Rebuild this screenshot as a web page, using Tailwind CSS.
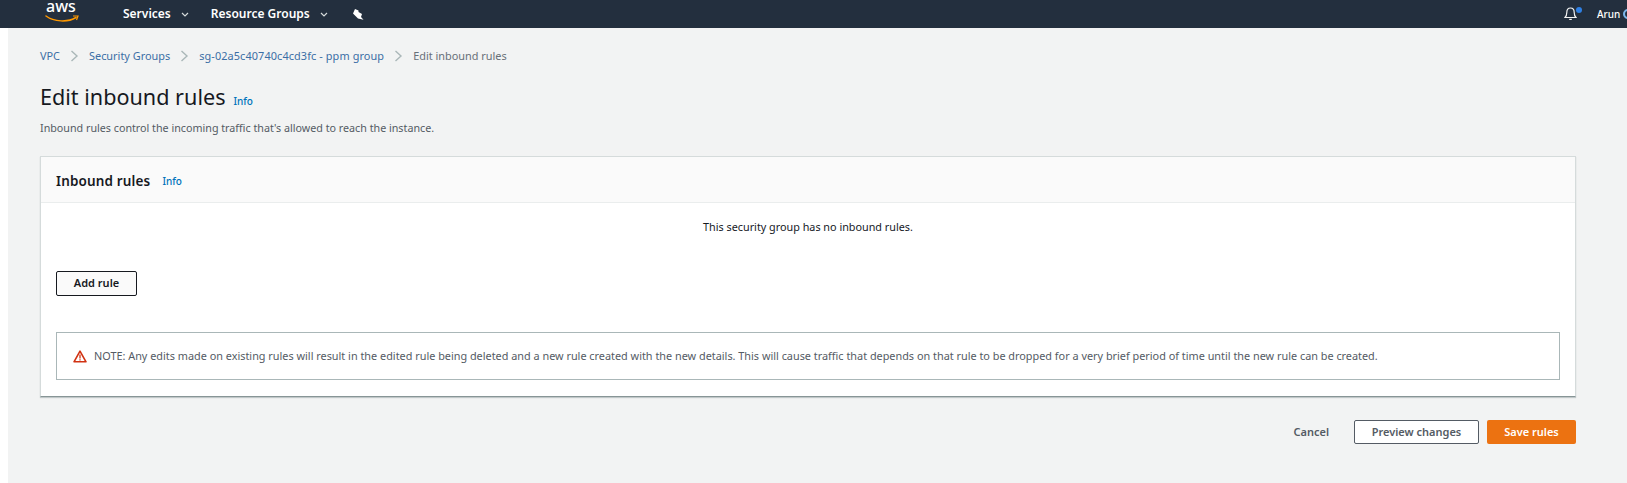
<!DOCTYPE html>
<html lang="en">
  <head>
    <meta charset="UTF-8" />
    <title>Edit inbound rules</title>
    <script src="https://cdn.jsdelivr.net/npm/@tailwindcss/browser@4"></script>
  </head>
  <body class="bg-white text-[#16191f] font-['Noto_Sans',sans-serif] h-[483px] overflow-hidden">
    <nav class="h-[28px] bg-[#232f3e] flex items-center text-white overflow-hidden">
      <div class="w-[123px] pl-[46px] shrink-0 relative h-[28px]">
        <div class="leading-[13px] text-[16px] font-medium">aws</div>
        <svg class="absolute left-[45px] top-[15px]" width="34" height="8" viewBox="0 0 34 8" fill="none">
          <path d="M1 1 C9 7 23 7.5 31 2.5" stroke="#ff9900" stroke-width="1.5" stroke-linecap="round" />
          <path d="M28 1 L33 1 L31.5 5" stroke="#ff9900" stroke-width="1.2" />
        </svg>
      </div>
      <span class="text-[12px] font-semibold">Services</span>
      <svg class="ml-[10px]" width="8" height="5" viewBox="0 0 8 5" fill="none"><path d="M1 1 L4 4 L7 1" stroke="#d5dbdb" stroke-width="1.2" /></svg>
      <span class="ml-[22px] text-[12px] font-semibold">Resource Groups</span>
      <svg class="ml-[10px]" width="8" height="5" viewBox="0 0 8 5" fill="none"><path d="M1 1 L4 4 L7 1" stroke="#d5dbdb" stroke-width="1.2" /></svg>
      <svg class="ml-[25px]" width="11" height="11" viewBox="0 0 11 11" fill="#fff"><path d="M2 0 L5.5 1.5 L5.5 3 L9 5 L8 8 L10.5 10.7 L5 9.5 L3 7.5 L0 4.5 Z" /></svg>
      <div class="ml-auto flex items-center w-[63px] shrink-0 overflow-hidden">
        <svg class="shrink-0" width="13" height="14" viewBox="0 0 13 14" fill="none" stroke="#f2f3f3" stroke-width="1.2"><path d="M1 10.5 C2.5 9 2.8 7.5 2.8 5.5 C2.8 2.8 4.4 1 6.5 1 C8.6 1 10.2 2.8 10.2 5.5 C10.2 7.5 10.5 9 12 10.5 Z" /><path d="M5.2 12.4 H7.8" /></svg>
        <span class="ml-[20px] text-[10px] font-medium">Arun</span>
        <span class="ml-[3px] w-[10px] h-[10px] rounded-full border-2 border-[#7db7ec] shrink-0"></span>
      </div>
    </nav>
    <span class="absolute left-[1576px] top-[7px] w-[6px] h-[6px] rounded-full bg-[#2f80e4]"></span>
    <main class="ml-[8px] h-[455px] bg-[#f2f3f3] pl-[32px] pr-[51px]">
      <div class="pt-[21px] h-[56px] flex items-start text-[10.9px] leading-[14px]">
        <span class="text-[#3b6ea5]">VPC</span>
        <svg class="mx-[10px] mt-[1px]" width="9" height="12" viewBox="0 0 9 12" fill="none"><path d="M1.5 1 L7 6 L1.5 11" stroke="#aab7b8" stroke-width="1.4" /></svg>
        <span class="text-[#3b6ea5]">Security Groups</span>
        <svg class="mx-[10px] mt-[1px]" width="9" height="12" viewBox="0 0 9 12" fill="none"><path d="M1.5 1 L7 6 L1.5 11" stroke="#aab7b8" stroke-width="1.4" /></svg>
        <span class="text-[#3b6ea5] tracking-[0.1px]">sg-02a5c40740c4cd3fc - ppm group</span>
        <svg class="mx-[10px] mt-[1px]" width="9" height="12" viewBox="0 0 9 12" fill="none"><path d="M1.5 1 L7 6 L1.5 11" stroke="#aab7b8" stroke-width="1.4" /></svg>
        <span class="text-[#687078]">Edit inbound rules</span>
      </div>
      <div class="flex items-baseline h-[26px]">
        <h1 class="text-[21.6px] leading-[26px] font-normal">Edit inbound rules</h1>
        <a class="ml-[8px] text-[10px] font-medium text-[#0073bb]">Info</a>
      </div>
      <p class="mt-[11px] text-[10.72px] leading-[14px] text-[#545b64]">Inbound rules control the incoming traffic that's allowed to reach the instance.</p>
      <section class="mt-[21px] h-[241px] bg-white border border-[#d5dbdb] border-b-[#879596] shadow-[0_1px_1px_0_rgba(0,28,36,0.2)]">
        <header class="h-[46px] bg-[#fafafa] border-b border-[#eaeded] pl-[15px] pt-[4px] flex items-center">
          <h2 class="text-[13.5px] font-semibold tracking-[0.15px]">Inbound rules</h2>
          <a class="ml-[12px] text-[10px] font-medium text-[#0073bb]">Info</a>
        </header>
        <p class="mt-[17px] text-center text-[10.8px] leading-[14px] text-[#16191f]">This security group has no inbound rules.</p>
        <div class="pl-[15px] mt-[37px]">
          <button class="block w-[81px] h-[25px] bg-[#fafafa] border border-[#16191f] rounded-[2px] text-[11px] font-semibold">Add rule</button>
        </div>
        <div class="mx-[15px] mt-[36px] h-[48px] border border-[#aab7b8] flex items-center pl-[16px]">
          <svg class="shrink-0" width="14" height="13" viewBox="0 0 14 13" fill="none"><path d="M7 1.2 L13 11.8 H1 Z" stroke="#d13212" stroke-width="1.6" stroke-linejoin="round" /><path d="M7 4.5 V8.5" stroke="#d13212" stroke-width="1.3" /><path d="M7 9.3 V10.6" stroke="#d13212" stroke-width="1.3" /></svg>
          <p class="ml-[7px] text-[10.86px] leading-[14px] text-[#545b64] whitespace-nowrap">NOTE: Any edits made on existing rules will result in the edited rule being deleted and a new rule created with the new details. This will cause traffic that depends on that rule to be dropped for a very brief period of time until the new rule can be created.</p>
        </div>
      </section>
      <footer class="mt-[23px] flex justify-end items-center text-[11px] font-semibold">
        <span class="text-[#545b64] mr-[25px]">Cancel</span>
        <button class="w-[125px] h-[24px] bg-white border border-[#545b64] rounded-[2px] text-[#545b64]">Preview changes</button>
        <button class="ml-[8px] w-[89px] h-[24px] bg-[#ec7211] rounded-[2px] text-white">Save rules</button>
      </footer>
    </main>
  </body>
</html>
